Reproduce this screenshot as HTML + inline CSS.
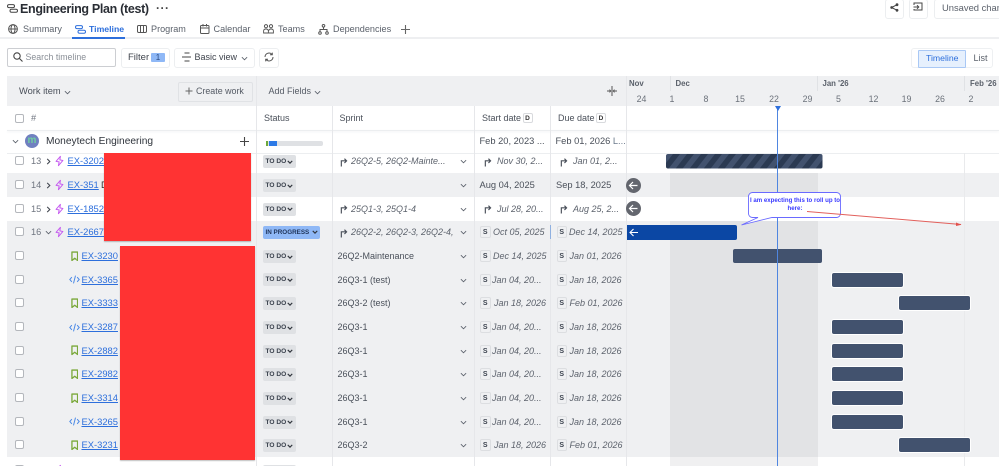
<!DOCTYPE html>
<html><head><meta charset="utf-8">
<style>
html,body{margin:0;padding:0;background:#fff;width:999px;height:466px;overflow:hidden}
body{position:relative;font-family:"Liberation Sans",sans-serif;color:#454c58;font-size:9.2px}
div,a,span.a,svg{position:absolute}
#w{left:0;top:0;width:999px;height:466px;overflow:hidden}
.t{white-space:nowrap;line-height:14px;height:14px}
.bg{left:7px;width:992px}
.v{width:1px;background:#e6e7ea}
.cb{left:15px;width:7px;height:7px;border:1px solid #b4b7bc;border-radius:2px;background:#fff}
.l{color:#2d6fdc;text-decoration:underline;white-space:nowrap;line-height:14px;font-size:9.4px}
.chip{left:262.5px;width:33px;height:13px;background:#dfe1e4;border-radius:2px;font-weight:700;font-size:6.6px;line-height:13px;color:#3a414d;text-indent:3px;white-space:nowrap}
.n{left:31px;color:#6f7580;font-size:9.2px;line-height:14px}
.s{color:#4a505a;font-size:9px;line-height:14px;white-space:nowrap}
.i{color:#5d636d;font-style:italic;font-size:9px;line-height:14px;white-space:nowrap}
.d{color:#4a505a;font-size:9.3px;line-height:14px;white-space:nowrap}
.S{width:8.5px;height:10px;border:1px solid #dcdee1;background:#eff0f2;border-radius:2px;font-size:7px;font-weight:700;line-height:11px;text-align:center;color:#3a414d}
.bar{height:14px;background:#42526e;border-radius:2px;box-shadow:0 0 0 1px #fff}
.th{color:#4a505a;font-size:9px;line-height:14px;white-space:nowrap}
.tab{top:22px;color:#5b616b;font-size:9.1px;line-height:14px;white-space:nowrap}
.m{top:77px;font-size:7.8px;line-height:13px;color:#5b616b;font-weight:700;white-space:nowrap}
.day{top:93px;font-size:8.8px;line-height:12px;color:#6b717a;width:20px;text-align:center}
.btn{border:1px solid #eceef0;border-radius:3px;background:#fff}
.dD{width:8px;height:8px;border:1px solid #d8dadd;border-radius:2px;font-size:6.5px;font-weight:700;line-height:9px;text-align:center;color:#333;top:113px}
</style></head><body><div id="w">
<svg width="0" height="0" style="left:0;top:0"><defs>
<symbol id="bolt" viewBox="0 0 10 12"><path d="M6 .8 1.2 6.4 4.6 7 3.8 11.2 8.8 5.4 5.4 4.8Z" fill="none" stroke="#c65cf0" stroke-width="1.1" stroke-linejoin="round"/></symbol>
<symbol id="book" viewBox="0 0 8 11"><path d="M1 1h6v9L4 7.6 1 10Z" fill="none" stroke="#7aa83a" stroke-width="1.4" stroke-linejoin="round"/></symbol>
<symbol id="code" viewBox="0 0 11 9"><path d="M2.6 2.4.8 4.5l1.8 2.1M8.4 2.4l1.8 2.1-1.8 2.1M6.4 1 4.6 8" fill="none" stroke="#4c8ae6" stroke-width="1" stroke-linecap="round"/></symbol>
<symbol id="dn" viewBox="0 0 8 5"><path d="M1 1l3 3 3-3" fill="none" stroke="#5b616b" stroke-width="1"/></symbol>
<symbol id="dnb" viewBox="0 0 8 5"><path d="M1 1l3 3 3-3" fill="none" stroke="#2f343c" stroke-width="1.6"/></symbol>
<symbol id="rt" viewBox="0 0 5 8"><path d="M1 1l3 3-3 3" fill="none" stroke="#3f444d" stroke-width="1.2"/></symbol>
<symbol id="arr" viewBox="0 0 9 11"><path d="M1.5 10.5V4.2h5.5M5 1.8 7.4 4.2 5 6.6" fill="none" stroke="#4a505a" stroke-width="1.3"/></symbol>
<symbol id="back" viewBox="0 0 15 15"><circle cx="7.5" cy="7.5" r="7.5" fill="#63666e"/><path d="M11.5 7.5h-8M7 4 3.5 7.5 7 11" fill="none" stroke="#fff" stroke-width="1.2"/></symbol>
<symbol id="tl" viewBox="0 0 11 9"><rect x=".5" y=".6" width="7" height="3" rx="1.5" fill="none" stroke="currentColor"/><rect x="3" y="5.2" width="7.5" height="3" rx="1.5" fill="none" stroke="currentColor"/></symbol>
<pattern id="st" width="14" height="14" patternUnits="userSpaceOnUse" patternTransform="skewX(-38)"><rect width="14" height="14" fill="#2b3a52"/><rect width="7" height="14" fill="#42526e"/></pattern>
</defs></svg>

<!-- top bar -->
<svg style="left:7px;top:4px;color:#444" width="11" height="9"><use href="#tl"/></svg>
<div class="t" style="left:20px;top:1.5px;font-size:12.5px;font-weight:700;color:#2a2e35;line-height:15px;letter-spacing:-.32px">Engineering Plan (test)</div>
<div class="t" style="left:156px;top:1px;font-size:12px;font-weight:700;color:#444;line-height:14px;letter-spacing:.5px">···</div>
<div class="btn" style="left:885px;top:-1px;width:17px;height:18px"></div>
<svg style="left:890px;top:3px" width="9" height="9" viewBox="0 0 9 9"><circle cx="1.7" cy="4.5" r="1.4" fill="#444"/><circle cx="7" cy="1.7" r="1.4" fill="#444"/><circle cx="7" cy="7.3" r="1.4" fill="#444"/><path d="M1.7 4.5 7 1.7M1.7 4.5 7 7.3" stroke="#444"/></svg>
<div class="btn" style="left:909px;top:-1px;width:17px;height:18px"></div>
<svg style="left:913px;top:2px" width="10" height="10" viewBox="0 0 10 10"><path d="M1 3V1h8v7H1V7M.5 5h5M4 3.2 5.8 5 4 6.8" fill="none" stroke="#444"/></svg>
<div class="btn" style="left:934px;top:-1px;width:80px;height:18px"></div>
<div class="t" style="left:942px;top:1px;color:#5b616b;font-size:9.4px">Unsaved chan</div>

<!-- tabs -->
<div style="left:0;top:37px;width:999px;height:2px;background:#eeeff1"></div>
<div style="left:72px;top:36.5px;width:53px;height:2px;background:#2d6fdc"></div>
<svg style="left:8px;top:24px" width="10" height="10" viewBox="0 0 10 10"><circle cx="5" cy="5" r="4.4" fill="none" stroke="#555"/><ellipse cx="5" cy="5" rx="2" ry="4.4" fill="none" stroke="#555"/><path d="M.6 5h8.8" stroke="#555"/></svg>
<div class="tab" style="left:23px">Summary</div>
<svg style="left:75px;top:24.5px;color:#2d6fdc" width="11" height="9"><use href="#tl"/></svg>
<div class="tab" style="left:89px;color:#2d6fdc;font-weight:700;font-size:8.7px">Timeline</div>
<svg style="left:137px;top:25px" width="10" height="8" viewBox="0 0 10 8"><rect x=".5" y=".5" width="9" height="7" rx="1.2" fill="none" stroke="#555"/><path d="M3.5.5v7M6.5.5v7" stroke="#555"/></svg>
<div class="tab" style="left:151px">Program</div>
<svg style="left:199.5px;top:23.5px" width="10" height="10" viewBox="0 0 10 10"><rect x=".5" y="1.5" width="8.5" height="8" rx="1" fill="none" stroke="#555"/><path d="M.5 4h8.5M3 0v2.5M6.5 0v2.5" stroke="#555"/></svg>
<div class="tab" style="left:213.5px">Calendar</div>
<svg style="left:263px;top:24px" width="11" height="10" viewBox="0 0 11 10"><circle cx="3" cy="2.2" r="1.6" fill="none" stroke="#555"/><circle cx="8" cy="2.2" r="1.6" fill="none" stroke="#555"/><path d="M.6 9V7c0-1.2 1-2 2.4-2s2.2.8 2.4 2v2zM5.6 7c.2-1.2 1-2 2.4-2s2.4.8 2.4 2v2H5.6" fill="none" stroke="#555" stroke-width=".9"/></svg>
<div class="tab" style="left:278px">Teams</div>
<svg style="left:318px;top:23.5px" width="11" height="11" viewBox="0 0 11 11"><circle cx="5.5" cy="1.8" r="1.3" fill="none" stroke="#555"/><circle cx="2" cy="9" r="1.3" fill="none" stroke="#555"/><circle cx="9" cy="9" r="1.3" fill="none" stroke="#555"/><path d="M5.5 3v2.5M2 7.700V5.5h7v2.2" fill="none" stroke="#555"/></svg>
<div class="tab" style="left:333px">Dependencies</div>
<svg style="left:400.5px;top:24.5px" width="9" height="9"><path d="M4.5 0v9M0 4.5h9" stroke="#666" stroke-width="1.1"/></svg>

<!-- toolbar -->
<div style="left:7px;top:48px;width:107px;height:17px;border:1px solid #ccced2;border-radius:2px"></div>
<svg style="left:13px;top:52px" width="10" height="10" viewBox="0 0 10 10"><circle cx="4" cy="4" r="3.2" fill="none" stroke="#444" stroke-width="1.1"/><path d="M6.500 6.500 9.500 9.500" stroke="#444" stroke-width="1.1"/></svg>
<div class="t" style="left:25.5px;top:50px;color:#8a8f97;font-size:8.8px">Search timeline</div>
<div class="btn" style="left:121px;top:48px;width:47px;height:18px"></div>
<div class="t" style="left:128px;top:51px;color:#3f444d;font-size:9.5px">Filter</div>
<div style="left:151px;top:53px;width:14px;height:9px;background:#8fb8f6;border-radius:1px;font-size:8px;line-height:9px;text-align:center;color:#2a4a80">1</div>
<div class="btn" style="left:174px;top:48px;width:79px;height:18px"></div>
<svg style="left:182px;top:52px" width="10" height="10" viewBox="0 0 10 10"><path d="M2.5 1h5M0 5h9M2.5 9h5" stroke="#444"/></svg>
<div class="t" style="left:194.5px;top:50px;color:#3f444d;font-size:9px">Basic view</div>
<svg style="left:240.5px;top:55.5px" width="7" height="5"><use href="#dn"/></svg>
<div class="btn" style="left:259px;top:48px;width:18px;height:18px"></div>
<svg style="left:263.5px;top:52px" width="10" height="10" viewBox="0 0 10 10"><path d="M1 5a4 4 0 0 1 7-2.600M9 5a4 4 0 0 1-7 2.600M8.300 .6v2.200H6M1.700 9.400V7.200H4" fill="none" stroke="#555"/></svg>
<div style="left:911px;top:48px;width:80px;height:18px;border:1px solid #eef0f2;border-radius:3px"></div>
<div style="left:918px;top:50px;width:45.5px;height:15.5px;background:#e6f0fd;border:1px solid #a9c8f5;border-radius:1px"></div>
<div class="t" style="left:926px;top:51px;color:#2d6fdc;font-size:8.7px">Timeline</div>
<div class="t" style="left:973.5px;top:51px;color:#5b616b;font-size:9px">List</div>

<!-- table head -->
<div class="bg" style="top:76px;height:30px;background:#eff0f2"></div>
<div class="t" style="left:19px;top:84px;color:#4a505a;font-size:9.3px">Work item</div>
<svg style="left:63.5px;top:89.5px" width="7" height="5"><use href="#dn"/></svg>
<div style="left:178px;top:82px;width:73px;height:18px;background:#eff0f2;border:1px solid #e0e2e5;border-radius:2px"></div>
<svg style="left:185px;top:87px" width="8" height="8"><path d="M4 .5v7M.5 4h7" stroke="#666"/></svg>
<div class="t" style="left:196px;top:84px;color:#555b65;font-size:8.9px">Create work</div>
<div class="t" style="left:268.5px;top:84px;color:#555b65;font-size:9px">Add Fields</div>
<svg style="left:314px;top:89.5px" width="7" height="5"><use href="#dn"/></svg>
<svg style="left:607px;top:86px" width="10" height="10" viewBox="0 0 10 10"><path d="M5 0v10" stroke="#555"/><path d="M0 5h2.8M10 5H7.200" stroke="#555"/><path d="M2.500 3 4.400 5 2.500 7zM7.500 3 5.600 5 7.500 7z" fill="#555"/></svg>

<!-- timeline head -->
<div style="left:627px;top:76px;width:372px;height:30px;background:#eff0f2"></div>
<div class="m" style="left:629px">Nov</div>
<div class="m" style="left:675.5px">Dec</div>
<div class="m" style="left:822.5px">Jan '26</div>
<div class="m" style="left:970px">Feb '26</div>
<div class="day" style="left:631.5px">24</div><div class="day" style="left:662px">1</div><div class="day" style="left:696px">8</div><div class="day" style="left:730px">15</div><div class="day" style="left:764px">22</div><div class="day" style="left:797.5px">29</div><div class="day" style="left:828.5px">5</div><div class="day" style="left:863.5px">12</div><div class="day" style="left:896.5px">19</div><div class="day" style="left:930px">26</div><div class="day" style="left:961px">2</div>
<div class="v" style="left:670px;top:76px;height:15px;background:#e0e2e5"></div>
<div class="v" style="left:817px;top:76px;height:15px;background:#e0e2e5"></div>
<div class="v" style="left:964px;top:76px;height:15px;background:#e0e2e5"></div>

<!-- sub head -->
<div class="cb" style="top:114px"></div>
<div class="n" style="top:111px">#</div>
<div class="th" style="left:264px;top:111px">Status</div>
<div class="th" style="left:339.5px;top:111px">Sprint</div>
<div class="th" style="left:482px;top:111px">Start date</div><div class="dD" style="left:522.5px">D</div>
<div class="th" style="left:558px;top:111px">Due date</div><div class="dD" style="left:596px">D</div>
<div style="left:7px;top:129.5px;width:992px;height:1px;background:#eceef0;box-shadow:0 1px 2px #eceef0"></div>

<!-- group row -->
<svg style="left:12px;top:139px" width="7" height="5"><use href="#dn"/></svg>
<div style="left:25px;top:134px;width:14px;height:14px;border-radius:50%;background:#7080c0;color:#6fd0a0;font-size:10px;line-height:13px;text-align:center;font-weight:700">m</div>
<div class="t" style="left:46px;top:134.5px;font-size:10.2px;color:#2f343c">Moneytech Engineering</div>
<svg style="left:239.5px;top:136.5px" width="9" height="9"><path d="M4.500 0v9M0 4.500h9" stroke="#444" stroke-width="1.1"/></svg>
<div style="left:266px;top:141px;width:57px;height:4.5px;background:#dfe1e4;border-radius:2px"></div>
<div style="left:266px;top:141px;width:1.5px;height:4.5px;background:#6ca83c"></div>
<div style="left:269px;top:141px;width:7.5px;height:4.5px;background:#2d7ae6"></div>
<div class="d" style="left:479.5px;top:134px">Feb 20, 2023 ...</div>
<div class="d" style="left:555.5px;top:134px">Feb 01, 2026 <span style="color:#6c7a8c">L...</span></div>
<div style="left:7px;top:152.5px;width:992px;height:1px;background:#eceef0"></div>

<!-- row backgrounds -->
<div class="bg" style="top:173px;height:24px;background:#eff0f2"></div>
<div class="bg" style="top:220.5px;height:236.5px;background:#eff0f2"></div>

<!-- band -->
<div style="left:670px;top:173px;width:148px;height:24px;background:#e2e3e5"></div>
<div style="left:670px;top:220.5px;width:148px;height:236.5px;background:#e2e3e5"></div>
<div style="left:670px;top:457px;width:148px;height:9px;background:#f0f0f1"></div>

<!-- vertical lines -->
<div class="v" style="left:256px;top:76px;height:390px"></div>
<div class="v" style="left:332px;top:106px;height:360px"></div>
<div class="v" style="left:474px;top:106px;height:360px"></div>
<div class="v" style="left:550px;top:106px;height:360px"></div>
<div class="v" style="left:626px;top:76px;height:390px"></div>
<div class="v" style="left:964px;top:153px;height:313px;background:#e9eaec"></div>

<!-- checkboxes -->
<div class="cb" style="top:156px"></div><div class="cb" style="top:180px"></div><div class="cb" style="top:203.5px"></div><div class="cb" style="top:227px"></div><div class="cb" style="top:251px"></div><div class="cb" style="top:274.5px"></div><div class="cb" style="top:298px"></div><div class="cb" style="top:322px"></div><div class="cb" style="top:345.5px"></div><div class="cb" style="top:369px"></div><div class="cb" style="top:393px"></div><div class="cb" style="top:416.5px"></div><div class="cb" style="top:440px"></div><div class="cb" style="top:465px"></div>

<!-- numbers and parents -->
<div class="n" style="top:154px">13</div><div class="n" style="top:178px">14</div><div class="n" style="top:201.5px">15</div><div class="n" style="top:225px">16</div>
<svg style="left:46px;top:158px" width="5" height="7"><use href="#rt"/></svg>
<svg style="left:46px;top:182px" width="5" height="7"><use href="#rt"/></svg>
<svg style="left:46px;top:205.5px" width="5" height="7"><use href="#rt"/></svg>
<svg style="left:44.5px;top:230px" width="7" height="5"><use href="#dn"/></svg>
<svg style="left:55px;top:155px" width="9" height="12"><use href="#bolt"/></svg>
<svg style="left:55px;top:179px" width="9" height="12"><use href="#bolt"/></svg>
<svg style="left:55px;top:202.5px" width="9" height="12"><use href="#bolt"/></svg>
<svg style="left:55px;top:226px" width="9" height="12"><use href="#bolt"/></svg>
<span class="a l" style="left:67.5px;top:154px">EX-3202</span>
<span class="a l" style="left:67.5px;top:178px">EX-351</span><div class="t" style="left:101px;top:178px;color:#333;font-size:9.4px">D</div>
<span class="a l" style="left:67.5px;top:201.5px">EX-1852</span>
<span class="a l" style="left:67.5px;top:225px">EX-2667</span>

<!-- children -->
<svg style="left:70.5px;top:250.5px" width="7.5" height="10.5"><use href="#book"/></svg><span class="a l" style="left:81.5px;top:249px">EX-3230</span>
<svg style="left:68.5px;top:275px" width="11" height="9"><use href="#code"/></svg><span class="a l" style="left:81.5px;top:272.5px">EX-3365</span>
<svg style="left:70.5px;top:297.5px" width="7.5" height="10.5"><use href="#book"/></svg><span class="a l" style="left:81.5px;top:296px">EX-3333</span>
<svg style="left:68.5px;top:322.5px" width="11" height="9"><use href="#code"/></svg><span class="a l" style="left:81.5px;top:320px">EX-3287</span>
<svg style="left:70.5px;top:345px" width="7.5" height="10.5"><use href="#book"/></svg><span class="a l" style="left:81.5px;top:343.5px">EX-2882</span>
<svg style="left:70.5px;top:368.5px" width="7.5" height="10.5"><use href="#book"/></svg><span class="a l" style="left:81.5px;top:367px">EX-2982</span>
<svg style="left:70.5px;top:392.5px" width="7.5" height="10.5"><use href="#book"/></svg><span class="a l" style="left:81.5px;top:391px">EX-3314</span>
<svg style="left:68.5px;top:417px" width="11" height="9"><use href="#code"/></svg><span class="a l" style="left:81.5px;top:414.5px">EX-3265</span>
<svg style="left:70.5px;top:439.5px" width="7.5" height="10.5"><use href="#book"/></svg><span class="a l" style="left:81.5px;top:438px">EX-3231</span>
<svg style="left:55px;top:464px" width="9" height="12"><use href="#bolt"/></svg>

<!-- red boxes -->
<div style="left:104px;top:152.5px;width:146.5px;height:88.5px;background:#ff3333;box-shadow:0 1px 1px rgba(0,0,0,.25)"></div>
<div style="left:120px;top:245.5px;width:135px;height:214.5px;background:#ff3333;box-shadow:0 1px 1px rgba(0,0,0,.25)"></div>

<!-- status chips -->
<div class="chip" style="top:155px">TO DO</div><div class="chip" style="top:179px">TO DO</div><div class="chip" style="top:202.5px">TO DO</div>
<div class="chip" style="top:225.5px;width:57.5px;background:#8fb8f6;color:#1f3358;font-size:6.3px">IN PROGRESS</div>
<div class="chip" style="top:250px">TO DO</div><div class="chip" style="top:273px">TO DO</div><div class="chip" style="top:297px">TO DO</div><div class="chip" style="top:321px">TO DO</div><div class="chip" style="top:344.5px">TO DO</div><div class="chip" style="top:368px">TO DO</div><div class="chip" style="top:392px">TO DO</div><div class="chip" style="top:415.5px">TO DO</div><div class="chip" style="top:439px">TO DO</div><div class="chip" style="top:465px">TO DO</div>
<svg style="left:286.5px;top:159.5px" width="6" height="4"><use href="#dnb"/></svg><svg style="left:286.5px;top:183.5px" width="6" height="4"><use href="#dnb"/></svg><svg style="left:286.5px;top:207px" width="6" height="4"><use href="#dnb"/></svg><svg style="left:311.5px;top:230px" width="6" height="4"><use href="#dnb"/></svg><svg style="left:286.5px;top:254.5px" width="6" height="4"><use href="#dnb"/></svg><svg style="left:286.5px;top:277.5px" width="6" height="4"><use href="#dnb"/></svg><svg style="left:286.5px;top:301.5px" width="6" height="4"><use href="#dnb"/></svg><svg style="left:286.5px;top:325.5px" width="6" height="4"><use href="#dnb"/></svg><svg style="left:286.5px;top:349px" width="6" height="4"><use href="#dnb"/></svg><svg style="left:286.5px;top:372.5px" width="6" height="4"><use href="#dnb"/></svg><svg style="left:286.5px;top:396.5px" width="6" height="4"><use href="#dnb"/></svg><svg style="left:286.5px;top:420px" width="6" height="4"><use href="#dnb"/></svg><svg style="left:286.5px;top:443.5px" width="6" height="4"><use href="#dnb"/></svg>

<!-- sprint -->
<svg style="left:339.5px;top:156.5px" width="8" height="10"><use href="#arr"/></svg><div class="i" style="left:351px;top:154px">26Q2-5, 26Q2-Mainte...</div>
<svg style="left:339.5px;top:204px" width="8" height="10"><use href="#arr"/></svg><div class="i" style="left:351px;top:201.5px">25Q1-3, 25Q1-4</div>
<svg style="left:339.5px;top:227.5px" width="8" height="10"><use href="#arr"/></svg><div class="i" style="left:351px;top:225px">26Q2-2, 26Q2-3, 26Q2-4,</div>
<div class="s" style="left:337.5px;top:249px">26Q2-Maintenance</div>
<div class="s" style="left:337.5px;top:272.5px">26Q3-1 (test)</div>
<div class="s" style="left:337.5px;top:296px">26Q3-2 (test)</div>
<div class="s" style="left:337.5px;top:320px">26Q3-1</div>
<div class="s" style="left:337.5px;top:343.5px">26Q3-1</div>
<div class="s" style="left:337.5px;top:367px">26Q3-1</div>
<div class="s" style="left:337.5px;top:391px">26Q3-1</div>
<div class="s" style="left:337.5px;top:414.5px">26Q3-1</div>
<div class="s" style="left:337.5px;top:438px">26Q3-2</div>
<svg style="left:460px;top:159px" width="7" height="5"><use href="#dn"/></svg><svg style="left:460px;top:183px" width="7" height="5"><use href="#dn"/></svg><svg style="left:460px;top:206.5px" width="7" height="5"><use href="#dn"/></svg><svg style="left:460px;top:230px" width="7" height="5"><use href="#dn"/></svg><svg style="left:460px;top:254px" width="7" height="5"><use href="#dn"/></svg><svg style="left:460px;top:277.5px" width="7" height="5"><use href="#dn"/></svg><svg style="left:460px;top:301px" width="7" height="5"><use href="#dn"/></svg><svg style="left:460px;top:325px" width="7" height="5"><use href="#dn"/></svg><svg style="left:460px;top:348.5px" width="7" height="5"><use href="#dn"/></svg><svg style="left:460px;top:372px" width="7" height="5"><use href="#dn"/></svg><svg style="left:460px;top:396px" width="7" height="5"><use href="#dn"/></svg><svg style="left:460px;top:419.5px" width="7" height="5"><use href="#dn"/></svg><svg style="left:460px;top:443px" width="7" height="5"><use href="#dn"/></svg>

<!-- dates -->
<svg style="left:484px;top:156.5px" width="8" height="10"><use href="#arr"/></svg><div class="i" style="left:497px;top:154px">Nov 30, 2...</div>
<svg style="left:560px;top:156.5px" width="8" height="10"><use href="#arr"/></svg><div class="i" style="left:573px;top:154px">Jan 01, 2...</div>
<div class="d" style="left:479.5px;top:178px">Aug 04, 2025</div><div class="d" style="left:556px;top:178px">Sep 18, 2025</div>
<svg style="left:484px;top:204px" width="8" height="10"><use href="#arr"/></svg><div class="i" style="left:497px;top:201.5px">Jul 28, 20...</div>
<svg style="left:560px;top:204px" width="8" height="10"><use href="#arr"/></svg><div class="i" style="left:573px;top:201.5px">Aug 25, 2...</div>

<div class="S" style="left:480px;top:226px">S</div><div class="i" style="left:493px;top:225px">Oct 05, 2025</div>
<div class="S" style="left:556.5px;top:226px">S</div><div class="i" style="left:569px;top:225px">Dec 14, 2025</div>
<div style="left:550px;top:225px;width:1px;height:14px;background:#8fb0e0"></div>
<div class="S" style="left:480px;top:250px">S</div><div class="i" style="left:493px;top:249px">Dec 14, 2025</div>
<div class="S" style="left:556.5px;top:250px">S</div><div class="i" style="left:569.5px;top:249px">Jan 01, 2026</div>

<div class="S" style="left:480px;top:273.5px">S</div><div class="i" style="left:492px;top:272.5px">Jan 04, 20...</div><div class="S" style="left:556.5px;top:273.5px">S</div><div class="i" style="left:569.5px;top:272.5px">Jan 18, 2026</div>
<div class="S" style="left:480px;top:297px">S</div><div class="i" style="left:494px;top:296px">Jan 18, 2026</div><div class="S" style="left:556.5px;top:297px">S</div><div class="i" style="left:569.5px;top:296px">Feb 01, 2026</div>
<div class="S" style="left:480px;top:321px">S</div><div class="i" style="left:492px;top:320px">Jan 04, 20...</div><div class="S" style="left:556.5px;top:321px">S</div><div class="i" style="left:569.5px;top:320px">Jan 18, 2026</div>
<div class="S" style="left:480px;top:344.5px">S</div><div class="i" style="left:492px;top:343.5px">Jan 04, 20...</div><div class="S" style="left:556.5px;top:344.5px">S</div><div class="i" style="left:569.5px;top:343.5px">Jan 18, 2026</div>
<div class="S" style="left:480px;top:368px">S</div><div class="i" style="left:492px;top:367px">Jan 04, 20...</div><div class="S" style="left:556.5px;top:368px">S</div><div class="i" style="left:569.5px;top:367px">Jan 18, 2026</div>
<div class="S" style="left:480px;top:392px">S</div><div class="i" style="left:492px;top:391px">Jan 04, 20...</div><div class="S" style="left:556.5px;top:392px">S</div><div class="i" style="left:569.5px;top:391px">Jan 18, 2026</div>
<div class="S" style="left:480px;top:415.5px">S</div><div class="i" style="left:492px;top:414.5px">Jan 04, 20...</div><div class="S" style="left:556.5px;top:415.5px">S</div><div class="i" style="left:569.5px;top:414.5px">Jan 18, 2026</div>
<div class="S" style="left:480px;top:439px">S</div><div class="i" style="left:494px;top:438px">Jan 18, 2026</div><div class="S" style="left:556.5px;top:439px">S</div><div class="i" style="left:569.5px;top:438px">Feb 01, 2026</div>

<!-- bars -->
<svg style="left:666px;top:154px" width="156.5" height="14.5"><rect width="156.5" height="14.5" rx="2" fill="url(#st)"/></svg>
<svg style="left:626px;top:177.5px" width="15" height="15"><use href="#back"/></svg>
<svg style="left:626px;top:201px" width="15" height="15"><use href="#back"/></svg>
<div style="left:627px;top:225px;width:110px;height:14.5px;background:#0b47a4;border-radius:0 2px 2px 0"></div>
<svg style="left:629px;top:227.5px" width="10" height="9" viewBox="0 0 10 9"><path d="M9 4.5H1M4.5 1 1 4.5 4.5 8" fill="none" stroke="#fff" stroke-width="1.1"/></svg>
<div class="bar" style="left:732.5px;top:249px;width:89.5px;box-shadow:none"></div>
<div class="bar" style="left:832px;top:272.5px;width:71px"></div>
<div class="bar" style="left:898.5px;top:296px;width:71px"></div>
<div class="bar" style="left:832px;top:320px;width:71px"></div>
<div class="bar" style="left:832px;top:343.5px;width:71px"></div>
<div class="bar" style="left:832px;top:367px;width:71px"></div>
<div class="bar" style="left:832px;top:391px;width:71px"></div>
<div class="bar" style="left:832px;top:414.5px;width:71px"></div>
<div class="bar" style="left:898.5px;top:438px;width:71px"></div>

<!-- today -->
<div style="left:777px;top:106px;width:1.2px;height:360px;background:#4f86e0"></div>
<svg style="left:774.5px;top:106px" width="6" height="5"><path d="M0 0h6L3 5z" fill="#2d6fdc"/></svg>

<!-- callout -->
<svg style="left:738px;top:190px" width="235" height="40" viewBox="0 0 235 40">
<path d="M14.5 2.5h84a4 4 0 0 1 4 4v17a4 4 0 0 1-4 4H34L3.5 35 20 27.5H14.5a4 4 0 0 1-4-4v-17a4 4 0 0 1 4-4z" fill="#fff" stroke="#6a6aff" stroke-width=".9"/>
<path d="M69 21.5 223 34.5" stroke="#e2605c" stroke-width="1"/><path d="M223.5 34.7 218 32.5 218 36z" fill="#e2504c"/>
</svg>
<div style="left:749px;top:197px;width:92px;text-align:center;font-size:6.1px;line-height:7.5px;font-weight:700;color:#3a3aff;white-space:nowrap">I am expecting this to roll up to<br>here:</div>
</div></body></html>
